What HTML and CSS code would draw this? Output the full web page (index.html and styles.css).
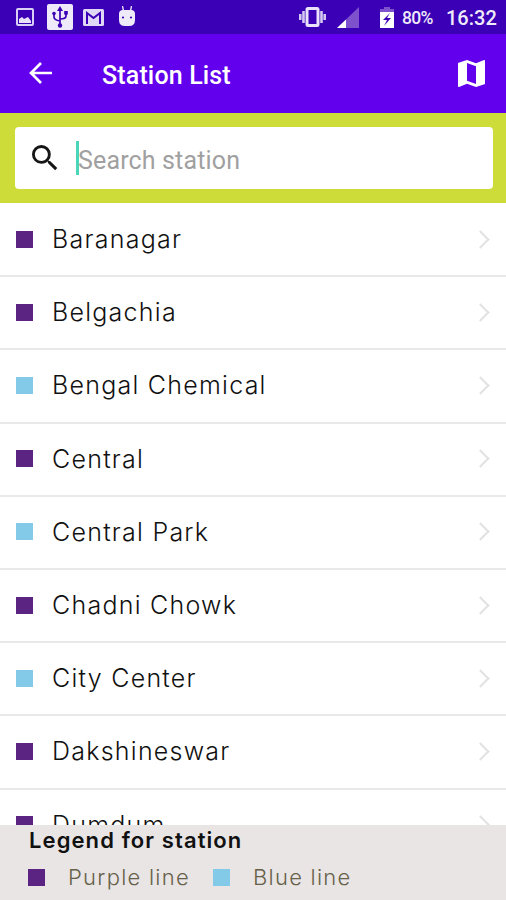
FILE: index.html
```html
<!DOCTYPE html>
<html lang="en">
<head>
    <meta charset="utf-8">
    <title>Station List</title>
    <link rel="stylesheet" href="styles.css">
</head>
<body>
    <div class="status-bar">
        <svg class="icon-image" width="18" height="18" viewBox="0 0 18 18">
            <rect x="1" y="1" width="16" height="16" rx="1" fill="none" stroke="#d9d0f5" stroke-width="2"/>
            <path d="M3 15v-4l3-2 2 2 4-2 3 4v2z" fill="#e8e2fa"/>
        </svg>
        <svg class="icon-usb" width="26" height="26" viewBox="0 0 26 26">
            <rect width="26" height="26" rx="2" fill="#eeeafa"/>
            <path d="M13 5v16M7 10v3q0 3 6 4M19 9v3q0 3-6 3" fill="none" stroke="#3b00b5" stroke-width="1.7"/>
            <path d="M13 2l3 5h-6z" fill="#3b00b5"/>
            <circle cx="13" cy="21.5" r="2.2" fill="#3b00b5"/>
            <circle cx="7" cy="9.5" r="1.8" fill="#3b00b5"/>
            <rect x="17.2" y="7" width="3.6" height="3.6" fill="#3b00b5"/>
        </svg>
        <svg class="icon-mail" width="21" height="17" viewBox="0 0 21 17">
            <rect width="21" height="17" rx="1.5" fill="#e0d9f6"/>
            <path d="M4 15V4l6.500 5L17 4v11" fill="none" stroke="#3b00b5" stroke-width="2"/>
        </svg>
        <svg class="icon-android" width="18" height="20" viewBox="0 0 18 20">
            <path d="M4.500 0l1 5M13.500 0l-1 5" stroke="#eeeafa" stroke-width="1.300"/>
            <path d="M1 8q0-4 4-4h8q4 0 4 4v6q0 6-6 6H7q-6 0-6-6z" fill="#eeeafa"/>
            <circle cx="5" cy="11.500" r="1.100" fill="#3b00b5"/>
            <circle cx="13" cy="11.500" r="1.100" fill="#3b00b5"/>
        </svg>
        <svg class="icon-vibrate" width="27" height="20" viewBox="0 0 27 20">
            <path d="M1.300 7v6M4.500 4v12M25.700 7v6M22.500 4v12" stroke="#d3c8f2" stroke-width="2.600"/>
            <rect x="8" y="1.500" width="11" height="17" rx="1" fill="none" stroke="#e8e2fa" stroke-width="3"/>
        </svg>
        <svg class="icon-signal" width="22" height="21" viewBox="0 0 22 21">
            <path d="M22 0v21H0z" fill="#7d52cc"/>
            <path d="M9 12.400V21H0z" fill="#fff"/>
        </svg>
        <svg class="icon-battery" width="14" height="21" viewBox="0 0 14 21">
            <path d="M4 0h6v2h4v4H0V2h4z" fill="#7d52cc"/>
            <path d="M0 5h14v16H0z" fill="#fff"/>
            <path d="M10 6l-7 7h4l-3 6 7-8H7z" fill="#3b00b5"/>
        </svg>
        <span class="battery-level">80%</span>
        <span class="clock">16:32</span>
    </div>

    <div class="toolbar">
        <svg class="back" width="24" height="24" viewBox="0 0 24 24">
            <path d="M24 12H3M13 2L3 12l10 10" fill="none" stroke="#fff" stroke-width="2.700"/>
        </svg>
        <h1>Station List</h1>
        <svg class="map" width="27" height="27" viewBox="3 3 18 18">
            <path d="M20.500 3l-.16.030L15 5.100 9 3 3.360 4.900c-.21.070-.36.250-.36.480V20.500c0 .280.220.500.500.500l.16-.030L9 18.900l6 2.100 5.640-1.900c.21-.070.360-.250.360-.480V3.500c0-.280-.220-.500-.500-.500zM15 19l-6-2.110V5l6 2.110V19z" fill="#fff"/>
        </svg>
    </div>

    <div class="search-bar">
        <div class="search-box">
            <svg width="26" height="26" viewBox="3 3 18 18">
                <path d="M15.500 14h-.79l-.28-.27A6.471 6.471 0 0 0 16 9.500 6.500 6.500 0 1 0 9.500 16c1.610 0 3.090-.59 4.230-1.570l.27.28v.79l5 4.990L20.490 19l-4.990-5zm-6 0C7.010 14 5 11.990 5 9.500S7.010 5 9.500 5 14 7.010 14 9.500 11.990 14 9.500 14z" fill="#161616"/>
            </svg>
            <div class="field">
                <input type="text" placeholder="Search station">
                <span class="caret"></span>
            </div>
        </div>
    </div>

    <ul class="stations">
        <li><span class="line purple"></span><span class="name">Baranagar</span><i class="chevron"></i></li>
        <li><span class="line purple"></span><span class="name">Belgachia</span><i class="chevron"></i></li>
        <li><span class="line blue"></span><span class="name">Bengal Chemical</span><i class="chevron"></i></li>
        <li><span class="line purple"></span><span class="name">Central</span><i class="chevron"></i></li>
        <li><span class="line blue"></span><span class="name">Central Park</span><i class="chevron"></i></li>
        <li><span class="line purple"></span><span class="name">Chadni Chowk</span><i class="chevron"></i></li>
        <li><span class="line blue"></span><span class="name">City Center</span><i class="chevron"></i></li>
        <li><span class="line purple"></span><span class="name">Dakshineswar</span><i class="chevron"></i></li>
        <li><span class="line purple"></span><span class="name">Dumdum</span><i class="chevron"></i></li>
    </ul>

    <div class="legend">
        <h2>Legend for station</h2>
        <div class="legend-items">
            <span class="line purple"></span>
            <span class="label">Purple line</span>
            <span class="line blue"></span>
            <span class="label">Blue line</span>
        </div>
    </div>
</body>
</html>
```
FILE: styles.css
```css
* {
    box-sizing: border-box;
}

body {
    margin: 0;
    height: 900px;
    display: flex;
    flex-direction: column;
    overflow: hidden;
    background-color: #fff;
    font-family: Roboto, sans-serif;
}

svg {
    display: block;
    flex: none;
}

.status-bar {
    flex: none;
    display: flex;
    align-items: center;
    height: 34px;
    padding: 0 10px 0 16px;
    background-color: #3b00b5;
    color: #eeeafa;
}

.icon-usb {
    margin-left: 13px;
}

.icon-mail {
    margin-left: 10px;
}

.icon-android {
    margin: -3px 0 0 14px;
}

.icon-vibrate {
    margin-left: auto;
}

.icon-signal {
    margin-left: 11px;
}

.icon-battery {
    margin-left: 21px;
}

.battery-level {
    width: 32px;
    margin: 2px 0 0 8px;
    font-size: 17.5px;
    font-weight: 500;
    letter-spacing: -0.7px;
}

.clock {
    width: 50px;
    margin: 2px 0 0 12px;
    font-size: 20px;
    font-weight: 500;
    white-space: nowrap;
}

.toolbar {
    flex: none;
    display: flex;
    align-items: center;
    height: 79px;
    padding: 0 21px 0 28px;
    background-color: #6200ee;
    color: #fff;
}

.back {
    margin-top: -1px;
}

.toolbar h1 {
    flex: 1;
    margin: 3px 0 0 50px;
    font-size: 25px;
    font-weight: 500;
    letter-spacing: 0.15px;
}

.search-bar {
    flex: none;
    height: 90px;
    padding: 14px 13px 14px 15px;
    background-color: #cddc39;
}

.search-box {
    display: flex;
    align-items: center;
    height: 62px;
    padding: 0 17px;
    background-color: #fff;
    border-radius: 4px;
}

.field {
    position: relative;
    flex: 1;
    margin-left: 20px;
}

.field input {
    display: block;
    width: 100%;
    height: 36px;
    padding: 4px 0 0;
    border: none;
    outline: none;
    font-family: inherit;
    font-size: 25px;
    letter-spacing: 0.15px;
}

.field input::placeholder {
    color: #a0a0a0;
}

.caret {
    position: absolute;
    left: -2px;
    top: 1px;
    width: 3px;
    height: 34px;
    background-color: #49d6b9;
}

.stations {
    flex: 1;
    min-height: 0;
    margin: 0;
    padding: 1px 0 0;
    overflow: hidden;
    list-style: none;
}

.stations li {
    display: flex;
    align-items: center;
    height: 73.2px;
    padding: 0 19px 1px 16px;
    border-bottom: 2px solid #e9e9e9;
}

.line {
    flex: none;
    width: 17px;
    height: 17px;
}

.purple {
    background-color: #5c2482;
}

.blue {
    background-color: #82cae8;
}

.name {
    flex: 1;
    margin-left: 19px;
    font-family: Inter, sans-serif;
    font-size: 25px;
    font-weight: 300;
    letter-spacing: 1.25px;
    color: #111;
}

.chevron {
    width: 13px;
    height: 13px;
    border-top: 2px solid #e2e2e2;
    border-right: 2px solid #e2e2e2;
    transform: rotate(45deg);
}

.legend {
    flex: none;
    height: 75px;
    padding: 0 28px;
    background-color: #e9e5e5;
    font-family: Inter, sans-serif;
}

.legend h2 {
    margin: 0 0 0 1px;
    font-size: 22px;
    font-weight: 600;
    line-height: 30px;
    letter-spacing: 1.1px;
    color: #111;
}

.legend-items {
    display: flex;
    align-items: center;
    margin-top: 8px;
    line-height: 28px;
}

.label {
    width: 122px;
    margin: 0 23px;
    font-size: 22px;
    font-weight: 300;
    letter-spacing: 1.25px;
    color: #67614a;
    white-space: nowrap;
}
```
